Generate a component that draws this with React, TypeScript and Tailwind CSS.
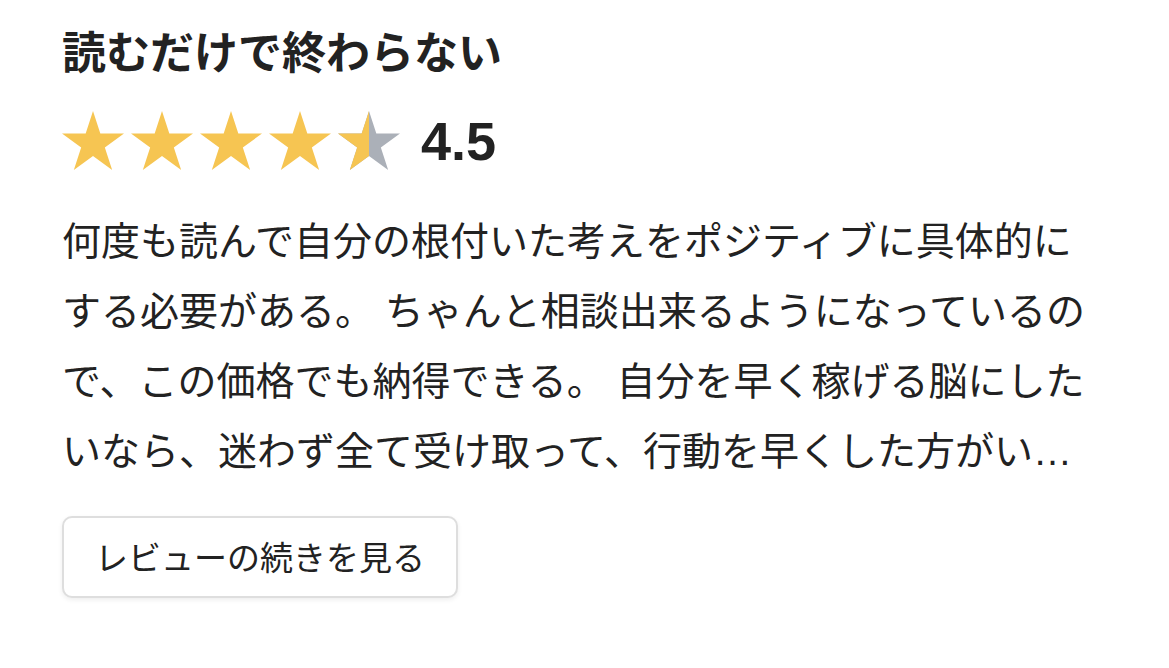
import React from 'react';

// Review card: title, star rating, clamped body text and a "read more" button

const STAR_POINTS = '50,0 61.8,36.3 100,36.3 69.1,58.8 80.9,95.1 50,72.7 19.1,95.1 30.9,58.8 0,36.3 38.2,36.3';

const Star = ({ fill }: { fill: 'full' | 'half' | 'empty' }) => {
  const id = React.useId();
  return (
    <svg viewBox="0 0 100 95.1" className="w-[62px] h-[59px] shrink-0">
      <defs>
        <clipPath id={id}>
          <rect x="0" y="0" width="50" height="96" />
        </clipPath>
      </defs>
      <polygon points={STAR_POINTS} fill={fill === 'full' ? '#f6c552' : '#abb0b8'} />
      {fill === 'half' && <polygon points={STAR_POINTS} fill="#f6c552" clipPath={`url(#${id})`} />}
    </svg>
  );
};

const StarRating = ({ value }: { value: number }) => {
  const stars = [0, 1, 2, 3, 4].map((i) => {
    if (value >= i + 1) return 'full';
    if (value >= i + 0.5) return 'half';
    return 'empty';
  }) as Array<'full' | 'half' | 'empty'>;

  return (
    <div className="flex items-center">
      <div className="flex items-center gap-[7px]">
        {stars.map((s, i) => (
          <Star key={i} fill={s} />
        ))}
      </div>
      <span className="ml-[21px] text-[54px] leading-none font-bold text-[#222] font-['Liberation_Sans',Arial,sans-serif]">
        {value.toFixed(1)}
      </span>
    </div>
  );
};

const review = {
  title: '読むだけで終わらない',
  rating: 4.5,
  body:
    '何度も読んで自分の根付いた考えをポジティブに具体的にする必要がある。 ちゃんと相談出来るようになっているので、この価格でも納得できる。 自分を早く稼げる脳にしたいなら、迷わず全て受け取って、行動を早くした方がいいと思います。実践することで結果が変わります。',
};

export default function App() {
  return (
    <div className="min-h-screen bg-white font-['Noto_Sans_CJK_JP','Noto_Sans',sans-serif] text-[#222]">
      <div className="px-[62px] pt-[24px]">
        <h2 className="text-[44px] leading-[53px] font-bold">{review.title}</h2>

        <div className="mt-[34px]">
          <StarRating value={review.rating} />
        </div>

        {/* Latin font first so the clamp ellipsis sits on the baseline */}
        <p className="mt-[37px] text-[39px] leading-[70px] line-clamp-4 font-['Liberation_Sans','Noto_Sans_CJK_JP',sans-serif]">
          {review.body}
        </p>

        <button className="mt-[29px] h-[82px] px-[31px] flex items-center rounded-[10px] border-2 border-[#dedede] bg-white shadow-[0_2px_5px_rgba(0,0,0,0.07)] text-[33px] text-[#222]">
          レビューの続きを見る
        </button>
      </div>
    </div>
  );
}
